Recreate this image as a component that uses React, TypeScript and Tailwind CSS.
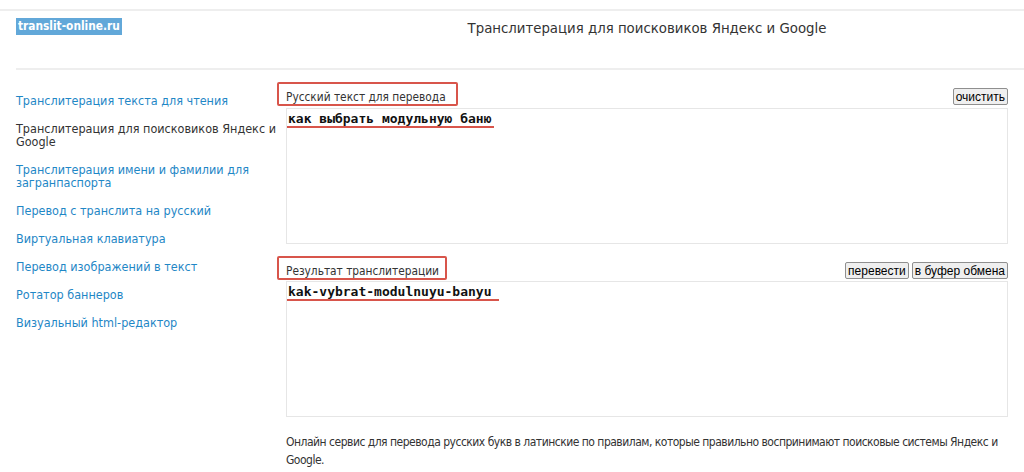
import React from "react";

const links = [
  { label: "Транслитерация текста для чтения", active: false },
  { label: "Транслитерация для поисковиков Яндекс и Google", active: true },
  { label: "Транслитерация имени и фамилии для загранпаспорта", active: false },
  { label: "Перевод с транслита на русский", active: false },
  { label: "Виртуальная клавиатура", active: false },
  { label: "Перевод изображений в текст", active: false },
  { label: "Ротатор баннеров", active: false },
  { label: "Визуальный html-редактор", active: false },
];

const ui = { fontFamily: '"DejaVu Sans Condensed", "DejaVu Sans", sans-serif' };
const narrow = { fontFamily: '"Liberation Sans Narrow", "DejaVu Sans Condensed", sans-serif' };
const mono = { fontFamily: '"DejaVu Sans Mono", "Liberation Mono", monospace' };
const btn = { fontFamily: '"Liberation Sans", Arial, sans-serif' };

function Button({ children }: { children: React.ReactNode }) {
  return (
    <button
      style={btn}
      className="h-[17px] px-[2px] text-[12px] leading-none text-black bg-[#efefef] border border-[#8f8f8f] rounded-[2px]"
    >
      {children}
    </button>
  );
}

// label with the red frame drawn round it
function Label({ text, w }: { text: string; w: string }) {
  return (
    <div className="relative text-[11.8px] leading-[15px] text-[#333]" style={ui}>
      <span>{text}</span>
      <span className={`absolute -left-[9px] -top-[8px] h-[24px] ${w} border-2 border-[#d8554b] rounded-[2px]`} />
    </div>
  );
}

function Field({ value, line }: { value: string; line: string }) {
  return (
    <div className="relative h-[136px] border border-[#e6e6e6]">
      <textarea
        readOnly
        value={value}
        style={mono}
        className="block w-full h-full resize-none outline-none px-[1px] pt-[2px] text-[13px] leading-[16px] font-semibold text-[#111] bg-white"
      />
      <span className={`absolute left-0 top-[17px] h-[2px] ${line} bg-[#d8554b]`} />
    </div>
  );
}

export default function App() {
  return (
    <div className="w-[1024px] h-[472px] bg-white overflow-hidden">
      <div className="h-[9px]" />
      <div className="border-t-2 border-[#eeeeee]" />
      <div className="pl-4">
        <div className="flex h-[59px] border-b-2 border-[#eeeeee]">
          <div className="w-[270px] pt-[1px]">
            <span
              style={ui}
              className="inline-block bg-[#62a8d9] text-white font-bold text-[11.8px] leading-[17px] px-[2px]"
            >
              translit-online.ru
            </span>
          </div>
          <div className="w-[722px] text-center pt-[8px]">
            <h1 style={narrow} className="text-[14.8px] leading-[18px] text-[#333]">
              Транслитерация для поисковиков Яндекс и Google
            </h1>
          </div>
        </div>
        <div className="flex">
          <nav className="w-[270px] pt-[24px] pr-[2px]" style={ui}>
            {links.map((l) => (
              <a
                key={l.label}
                href="#"
                className={`block mb-[15px] text-[12.5px] leading-[13px] ${l.active ? "text-[#333]" : "text-[#1f87c6]"}`}
              >
                {l.label}
              </a>
            ))}
          </nav>
          <main className="w-[722px] pt-[13px]">
            <div className="flex items-end justify-between h-[25px] pb-[3px]">
              <Label text="Русский текст для перевода" w="w-[181px]" />
              <Button>очистить</Button>
            </div>
            <Field value="как выбрать модульную баню" line="w-[207px]" />
            <div className="flex items-end justify-between h-[26px] mt-[11px] pb-[2px]">
              <Label text="Результат транслитерации" w="w-[170px]" />
              <div className="flex gap-[3px]">
                <Button>перевести</Button>
                <Button>в буфер обмена</Button>
              </div>
            </div>
            <Field value="kak-vybrat-modulnuyu-banyu" line="w-[212px]" />
            <p style={narrow} className="mt-[16px] text-[12px] leading-[18px] tracking-[-0.5px] text-[#333]">
              Онлайн сервис для перевода русских букв в латинские по правилам, которые правильно воспринимают поисковые системы Яндекс и Google.
            </p>
          </main>
        </div>
      </div>
    </div>
  );
}
